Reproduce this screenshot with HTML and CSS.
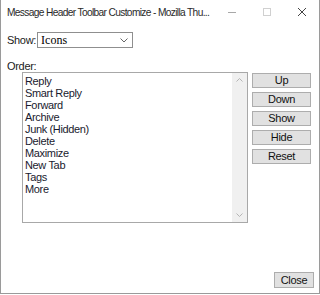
FILE: index.html
```html
<!DOCTYPE html>
<html>
<head>
<meta charset="utf-8">
<link rel="stylesheet" href="styles.css">
</head>
<body>
<div class="window">
  <div class="titlebar">
    <div class="title">Message Header Toolbar Customize - Mozilla Thu...</div>
    <div class="caption">
      <div class="cap-btn"><svg width="10" height="10" viewBox="0 0 10 10"><line x1="1" y1="5.5" x2="9" y2="5.5" stroke="#a8a8a8" stroke-width="1"/></svg></div>
      <div class="cap-btn"><svg width="10" height="10" viewBox="0 0 10 10"><rect x="1.5" y="1.5" width="7" height="7" fill="none" stroke="#d0d0d0" stroke-width="1"/></svg></div>
      <div class="cap-btn"><svg width="10" height="10" viewBox="0 0 10 10"><path d="M1 1 L9 9 M9 1 L1 9" stroke="#444" stroke-width="1"/></svg></div>
    </div>
  </div>
  <div class="content">
    <div class="show-row">
      <span class="label">Show:</span>
      <div class="select">
        <span class="select-text">Icons</span>
        <svg class="chev" width="8" height="5" viewBox="0 0 8 5"><path d="M0.5 0.5 L4 4 L7.5 0.5" fill="none" stroke="#666" stroke-width="1"/></svg>
      </div>
    </div>
    <div class="label order-label">Order:</div>
    <div class="main-row">
      <div class="listbox">
        <ul class="items">
          <li>Reply</li>
          <li>Smart Reply</li>
          <li>Forward</li>
          <li>Archive</li>
          <li>Junk (Hidden)</li>
          <li>Delete</li>
          <li>Maximize</li>
          <li>New Tab</li>
          <li>Tags</li>
          <li>More</li>
        </ul>
        <div class="scrollbar">
          <svg width="7" height="4" viewBox="0 0 7 4"><path d="M0.5 3.5 L3.5 0.5 L6.5 3.5" fill="none" stroke="#b5b5b5" stroke-width="1"/></svg>
          <svg width="7" height="4" viewBox="0 0 7 4"><path d="M0.5 0.5 L3.5 3.5 L6.5 0.5" fill="none" stroke="#b5b5b5" stroke-width="1"/></svg>
        </div>
      </div>
      <div class="buttons">
        <div class="btn">Up</div>
        <div class="btn">Down</div>
        <div class="btn">Show</div>
        <div class="btn">Hide</div>
        <div class="btn">Reset</div>
      </div>
    </div>
    <div class="footer">
      <div class="btn close-btn">Close</div>
    </div>
  </div>
</div>
</body>
</html>
```
FILE: styles.css
```css
html, body {
  margin: 0;
  padding: 0;
  background: #ffffff;
}
.window {
  width: 320px;
  height: 294px;
  box-sizing: border-box;
  border-left: 1px solid #9a9a9a;
  border-right: 1px solid #9a9a9a;
  border-bottom: 1px solid #9a9a9a;
  display: flex;
  flex-direction: column;
  font-family: "Liberation Sans", Arial, sans-serif;
  color: #111;
}
.titlebar {
  height: 25px;
  display: flex;
  align-items: center;
}
.title {
  flex: 1;
  min-width: 0;
  padding-left: 6px;
  font-size: 10.2px;
  letter-spacing: -0.65px;
  color: #2a2a2a;
  white-space: nowrap;
}
.caption {
  display: flex;
  flex-shrink: 0;
  height: 25px;
}
.cap-btn {
  width: 35px;
  display: flex;
  align-items: center;
  justify-content: center;
  padding-bottom: 2px;
}
.content {
  flex: 1;
  display: flex;
  flex-direction: column;
  padding: 7px 5px 5px 6px;
}
.label {
  font-size: 11px;
  letter-spacing: -0.3px;
  color: #1a1a1a;
}
.show-row {
  display: flex;
  align-items: center;
  gap: 1px;
  height: 16px;
}
.select {
  width: 96px;
  height: 16px;
  box-sizing: border-box;
  border: 1px solid #8f8f8f;
  display: flex;
  align-items: center;
  justify-content: space-between;
  padding: 0 4px 0 3px;
}
.select-text {
  font-family: "Liberation Serif", "Times New Roman", serif;
  font-size: 12px;
  color: #000;
}
.order-label {
  margin-top: 12px;
  line-height: 12px;
}
.main-row {
  display: flex;
  gap: 4px;
  margin-top: 0px;
}
.listbox {
  margin-left: 15px;
  width: 226px;
  height: 151px;
  box-sizing: border-box;
  border: 1px solid #a8a8a8;
  display: flex;
}
.items {
  flex: 1;
  list-style: none;
  margin: 0;
  padding: 2px 0 0 2px;
  font-size: 11px;
  letter-spacing: -0.35px;
  line-height: 12px;
  color: #1a1a2e;
}
.scrollbar {
  width: 15px;
  background: #f0f0f0;
  display: flex;
  flex-direction: column;
  justify-content: space-between;
  align-items: center;
  padding: 5px 0 5px 0;
}
.buttons {
  display: flex;
  flex-direction: column;
  gap: 4px;
  margin-top: 1px;
}
.btn {
  width: 59px;
  height: 15px;
  box-sizing: border-box;
  background: #e1e1e1;
  border: 1px solid #adadad;
  font-size: 11px;
  letter-spacing: -0.3px;
  line-height: 13px;
  text-align: center;
  color: #111;
}
.footer {
  margin-top: auto;
  display: flex;
  justify-content: flex-end;
}
.close-btn {
  width: 40px;
  height: 16px;
  line-height: 14px;
}
```
